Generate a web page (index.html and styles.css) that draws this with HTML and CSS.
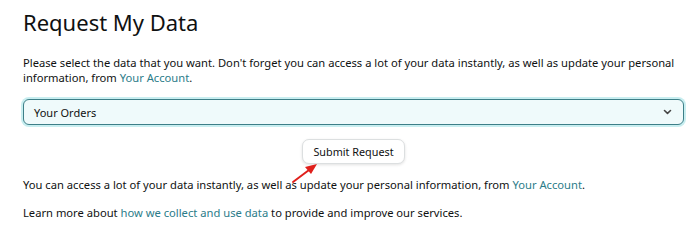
FILE: index.html
```html
<!DOCTYPE html>
<html lang="en">
<head>
  <meta charset="UTF-8" />
  <title>Request My Data</title>
  <link rel="stylesheet" href="styles.css">
</head>
<body>
  <div class="page">
    <h1>Request My Data</h1>
    <p class="intro">Please select the data that you want. Don't forget you can access a lot of your data instantly, as well as update your personal<br>information, from <a href="#">Your Account</a>.</p>

    <div class="select-box">
      <span>Your Orders</span>
      <svg class="chevron" width="9" height="6" viewBox="0 0 9 6">
        <path d="M1.5 1.5 L4.5 4.3 L7.5 1.5" fill="none" stroke="#444" stroke-width="1.6" stroke-linecap="round" stroke-linejoin="round" />
      </svg>
    </div>

    <div class="actions">
      <button class="submit">Submit Request</button>
      <svg class="arrow" width="30" height="24" viewBox="0 0 30 24">
        <line x1="3" y1="21" x2="19" y2="9" stroke="#e0201c" stroke-width="2" stroke-linecap="round" />
        <polygon points="27,3 15,6 21,13" fill="#e0201c" />
      </svg>
    </div>

    <p class="note">You can access a lot of your data instantly, as well as update your personal information, from <a href="#">Your Account</a>.</p>
    <p class="note">Learn more about <a href="#">how we collect and use data</a> to provide and improve our services.</p>
  </div>
</body>
</html>
```

FILE: styles.css
```css
body {
  margin: 0;
  background-color: #ffffff;
  color: #0f1111;
  font-family: "Noto Sans", "Open Sans", sans-serif;
}

.page {
  padding: 6px 16px 0 23px;
}

h1 {
  margin: 0;
  font-size: 22px;
  font-weight: 400;
  line-height: 32px;
}

a {
  color: #2b7c89;
  text-decoration: none;
}

.intro {
  margin: 17px 0 0;
  font-size: 11.2px;
  line-height: 15px;
}

.select-box {
  margin-top: 14px;
  height: 24px;
  display: flex;
  align-items: center;
  justify-content: space-between;
  padding: 0 10px;
  border: 1px solid #3d7f88;
  border-radius: 6px;
  background-color: #effafb;
  box-shadow: 0 0 0 2px #c8eef0;
  font-size: 11px;
}

.chevron {
  margin-right: 1px;
}

.actions {
  position: relative;
  display: flex;
  justify-content: center;
  margin-top: 14px;
}

.submit {
  height: 25px;
  padding: 0 10px;
  border: 1px solid #dcdfe0;
  border-radius: 7px;
  background-color: #ffffff;
  box-shadow: 0 1px 3px rgba(15, 17, 17, 0.12);
  color: #0f1111;
  font-family: inherit;
  font-size: 10.8px;
}

.arrow {
  position: absolute;
  left: 267px;
  top: 22px;
}

.note {
  margin: 13px 0 0;
  font-size: 11.2px;
  line-height: 15px;
}

.note + .note {
  margin-top: 13px;
}
```
